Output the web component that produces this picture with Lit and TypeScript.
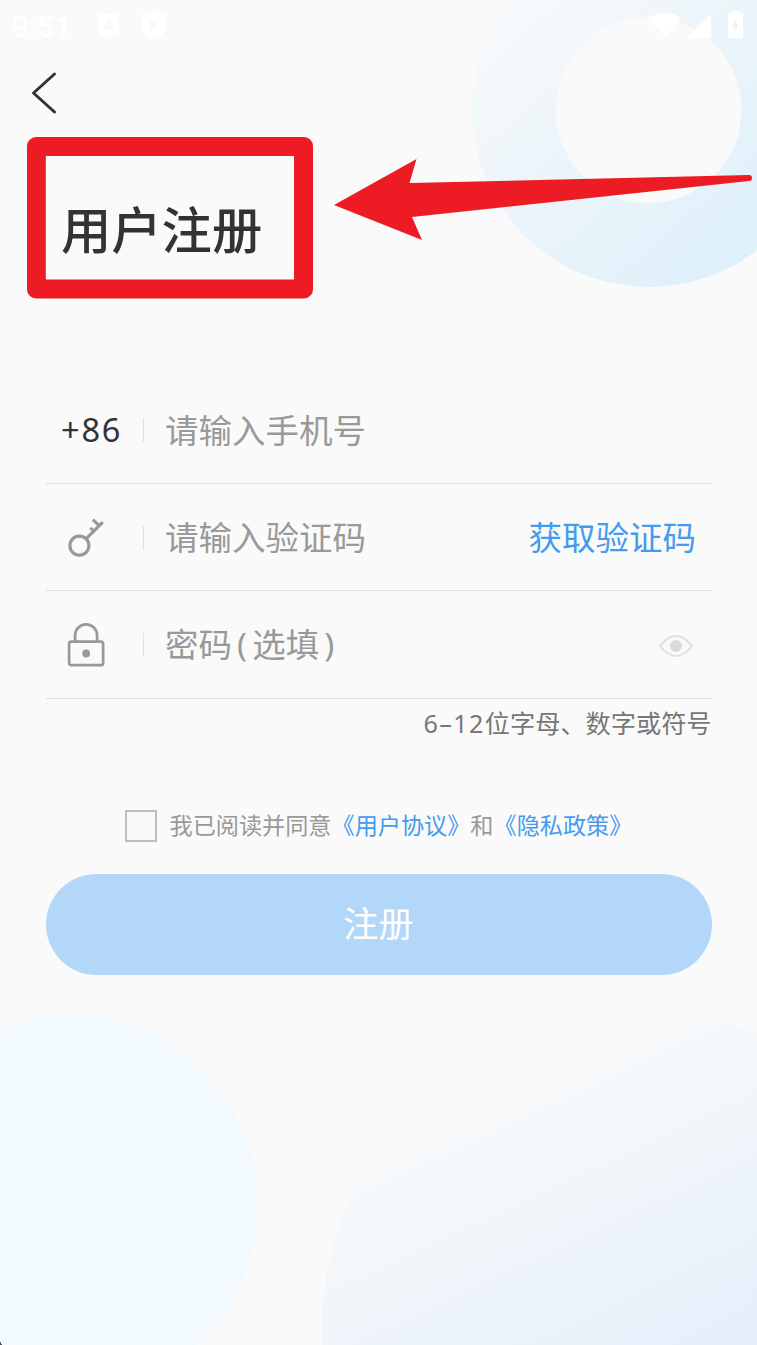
import { LitElement, html, css, svg } from "lit";
import { customElement } from "lit/decorators.js";

const keyIcon = svg`<svg class="icon" width="40" height="46" viewBox="0 0 40 46" fill="none" stroke="#999" stroke-width="3.2">
  <circle cx="13.4" cy="31.600" r="9.5"/>
  <path d="M20 24.900 36.800 8.200M33.200 11.600 26.900 5.600"/>
  <path d="M28.500 17.800 24.300 13.800" stroke-width="2.800"/>
</svg>`;

const lockIcon = svg`<svg class="icon" width="40" height="46" viewBox="0 0 40 46" fill="none" stroke="#999" stroke-width="2.7">
  <rect x="3.1" y="20.7" width="34" height="23.500" rx="2.2"/>
  <path d="M9.1 20.500V14.300a11 11 0 0 1 22 0V20.500"/>
  <circle cx="20.2" cy="32.500" r="3.9" fill="#999" stroke="none"/>
</svg>`;

const eyeIcon = svg`<svg class="eye" width="36" height="28" viewBox="0 0 36 28" fill="none" stroke="#dedede" stroke-width="2">
  <path d="M2 16Q18 -4 34 16Q18 36 2 16Z"/>
  <circle cx="18" cy="16" r="6" fill="#dadada" stroke="none"/>
</svg>`;

@customElement("app-root")
export class AppRoot extends LitElement {
  static styles = css`
    :host {
      display: block;
      position: relative;
      width: 757px;
      height: 1345px;
      overflow: hidden;
      background: #fafafa;
      color: #333;
      font-family: "Noto Sans CJK SC", sans-serif;
    }
    .backdrop, .marks { position: absolute; left: 0; top: 0; pointer-events: none; }
    .screen { position: relative; display: flex; flex-direction: column; }
    .status {
      display: flex; align-items: center; height: 50px; padding: 0 13px 0 12px;
      box-sizing: border-box; color: #fff;
      font: 500 30px/50px Roboto, sans-serif;
    }
    .time { width: 87px; padding-top: 3px; box-sizing: border-box; }
    .status svg { display: block; }
    .notes { display: flex; flex: 1; gap: 22px; align-items: center; }
    .back { height: 86px; padding: 21px 0 0 30px; box-sizing: border-box; }
    .back svg { display: block; }
    h1 {
      margin: 0; padding: 54px 61px 0; height: 240px; box-sizing: border-box;
      font-size: 50.3px; line-height: 75px; font-weight: 500;
    }
    .form { padding: 0 45.500px; }
    .row {
      display: flex; align-items: center; height: 107.5px; box-sizing: border-box;
      border-bottom: 1px solid #dddfe4; font-size: 33.5px; line-height: 50px;
    }
    .lead { width: 97px; padding-left: 15.5px; box-sizing: border-box; flex: none; }
    .icon { display: block; margin-left: 5px; }
    .latin { font-family: "Noto Sans", sans-serif; letter-spacing: 0.055em; }
    .dial { display: block; font-size: 32.500px; padding-top: 1px; }
    .bar { width: 1px; height: 24px; background: #e0e1e4; margin: 2px 21.5px 0 0; }
    .field { flex: 1; color: #999; padding-bottom: 1px; }
    .paren { display: inline-block; width: 20.2px; text-align: center; font-family: "Noto Sans", sans-serif; }
    .link { color: #459bec; }
    .code { padding: 0 15.5px 1px 0; }
    .eye { display: block; margin-right: 18px; }
    .hint {
      height: 111px; text-align: right; font-size: 25.2px; line-height: 38px;
      color: #777; padding-top: 4px; box-sizing: border-box;
    }
    .agree {
      display: flex; align-items: center; height: 32px; padding-left: 79.5px;
      font-size: 23.15px; line-height: 28px; color: #999; white-space: nowrap;
    }
    .terms { padding-bottom: 4px; }
    .check { width: 32px; height: 32px; box-sizing: border-box; border: 2px solid #bfbfbf; margin-right: 12.5px; }
    .submit {
      display: block; width: 100%; height: 100.5px; margin-top: 32.500px; border: 0; border-radius: 51px;
      background: #b3d7f9; color: #fff; font: 35.2px/50px "Noto Sans CJK SC", sans-serif; padding: 0 0 4px;
    }
  `;

  private row(lead: unknown, field: unknown, tail: unknown = "") {
    return html`<div class="row">
      <div class="lead">${lead}</div><div class="bar"></div>
      <div class="field">${field}</div>${tail}
    </div>`;
  }

  render() {
    return html`
      <svg class="backdrop" width="757" height="1345" viewBox="0 0 757 1345">
        <defs>
          <linearGradient id="ring" gradientUnits="userSpaceOnUse" x1="510" y1="-5" x2="740" y2="265">
            <stop offset="0" stop-color="#f7fafb"/><stop offset=".5" stop-color="#ebf4fa"/><stop offset="1" stop-color="#def0fa"/>
          </linearGradient>
          <linearGradient id="orb" gradientUnits="userSpaceOnUse" x1="480" y1="1060" x2="640" y2="1400">
            <stop offset="0" stop-color="#f9fafb"/><stop offset=".35" stop-color="#f3f7fa"/><stop offset=".6" stop-color="#edf3fb"/><stop offset="1" stop-color="#e4effa"/>
          </linearGradient>
        </defs>
        <circle cx="649" cy="110" r="177" fill="url(#ring)"/>
        <circle cx="648.5" cy="110" r="93" fill="#fafafa"/>
        <circle cx="68" cy="1205" r="190" fill="#f2f9ff"/>
        <circle cx="640" cy="1329" r="318" fill="url(#orb)"/>
        <path d="M0 1342h1v2h1v1H0z" fill="#555"/>
      </svg>
      <div class="screen">
        <div class="status">
          <span class="time">9:51</span>
          <div class="notes">
            <svg width="20" height="22" viewBox="0 0 20 22"><rect width="20" height="22" rx="2" fill="#fff"/><path d="M5.5 16 10 6l4.500 10M7.500 13h5" fill="none" stroke="#f8f8f8" stroke-width="1.800"/></svg>
            <svg width="26" height="30" viewBox="0 0 26 30"><path d="M13 0 25 5V14C25 22 20 27 13 30 6 27 1 22 1 14V5Z" fill="#fff"/><path d="M9 10v10l9-5z" fill="#f8f8f8"/></svg>
          </div>
          <svg width="96" height="30" viewBox="0 0 96 30" fill="#fff">
            <path d="M1 8Q17-2 33 8L17 27Z"/><path d="M63 4V28H39Z"/>
            <path d="M80 3h4V1h7v2h4v25H80Z"/><path d="M89 8l-5 8h3l-1 7 5-9h-3Z" fill="#e9f2f9"/>
          </svg>
        </div>
        <div class="back"><svg width="30" height="44" viewBox="0 0 30 44" fill="none" stroke="#333" stroke-width="3" stroke-linecap="round" stroke-linejoin="round"><path d="M24.500 3 3.500 22 24.500 41"/></svg></div>
        <h1>用户注册</h1>
        <div class="form">
          ${this.row(html`<span class="latin dial">+86</span>`, "请输入手机号")}
          ${this.row(keyIcon, "请输入验证码", html`<span class="link code">获取验证码</span>`)}
          ${this.row(lockIcon, html`密码<span class="paren">(</span>选填<span class="paren">)</span>`, eyeIcon)}
          <div class="hint"><span class="latin">6–12</span>位字母、数字或符号</div>
          <div class="agree"><span class="check"></span><span class="terms">我已阅读并同意<span class="link">《用户协议》</span>和<span class="link">《隐私政策》</span></span></div>
          <button class="submit">注册</button>
        </div>
      </div>
      <svg class="marks" width="757" height="310" viewBox="0 0 757 310">
        <path fill="#ed1c24" fill-rule="evenodd" d="M36 137H304a9 9 0 0 1 9 9V289.500a9 9 0 0 1-9 9H36a9 9 0 0 1-9-9V146a9 9 0 0 1 9-9ZM45.800 156V279.500H294V156Z"/>
        <path fill="#ed1c24" d="M334 205 416.500 159 409.500 183 749 175a3 3 0 0 1 0 6L412 217 422 240Z"/>
      </svg>
    `;
  }
}
